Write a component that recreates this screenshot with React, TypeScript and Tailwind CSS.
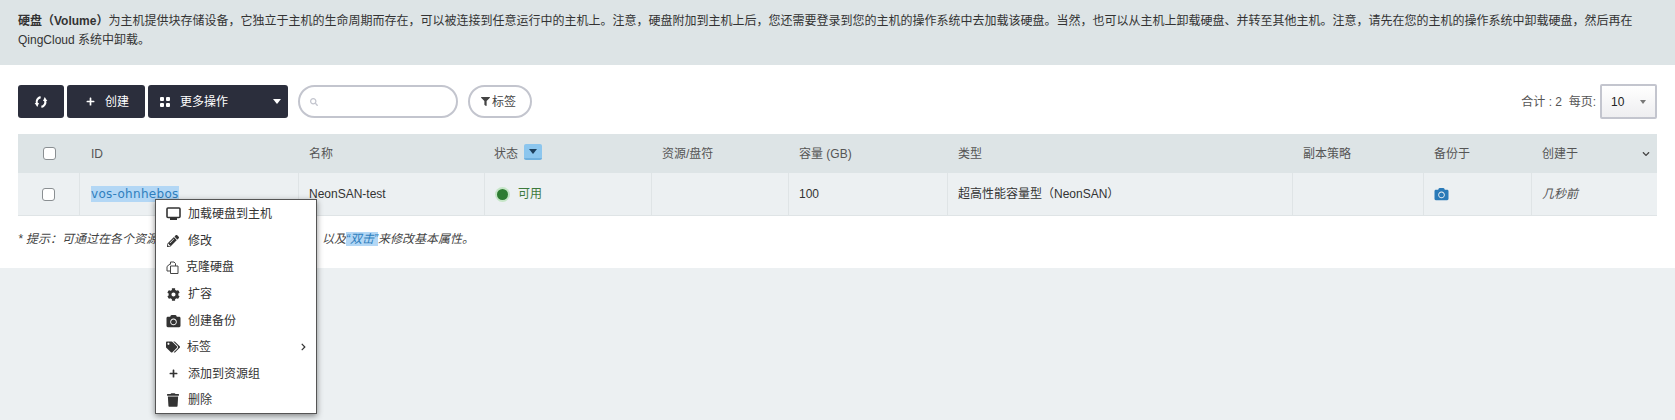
import { FaCamera, FaChevronDown, FaChevronRight, FaCog, FaFilter, FaPencilAlt, FaPlus, FaSearch, FaTags, FaTrash } from 'react-icons/fa';

const sans = { fontFamily: '"Liberation Sans", "Noto Sans CJK SC", sans-serif' };

function Checkbox() {
  return <span className="block w-[13px] h-[13px] rounded-[3px] border border-[#8a8f92] bg-white" />;
}

function DarkButton({ className, children }: { className: string; children: React.ReactNode }) {
  return (
    <button className={`h-[33px] rounded-[3px] bg-[#2b2e3c] text-white text-xs flex items-center ${className}`}>
      {children}
    </button>
  );
}

function MonitorIcon() {
  return (
    <svg width="15" height="14" viewBox="0 0 15 14" fill="none">
      <rect x="1" y="1" width="13" height="9.5" rx="1" stroke="#333" strokeWidth="1.6" />
      <path d="M4 11h7v2H4z" fill="#333" />
    </svg>
  );
}

function CloneIcon() {
  return (
    <svg width="13" height="13" viewBox="0 0 13 13" fill="none" stroke="#444" strokeWidth="1">
      <path d="M4.5 3.5V1h3.5l1.5 1.5v2.5" />
      <path d="M4.5 2.5L1 5.5v4.5h3.5" />
      <path d="M4.5 5h7.5v7.5H4.5z" />
    </svg>
  );
}

const columns = [
  { label: '', width: 'w-[62px]', pad: 'justify-center' },
  { label: 'ID', width: 'w-[219px]', pad: 'pl-[11px]' },
  { label: '名称', width: 'w-[186px]', pad: 'pl-[10px]' },
  { label: '状态', width: 'w-[167px]', pad: 'pl-[9px]' },
  { label: '资源/盘符', width: 'w-[137px]', pad: 'pl-[10px]' },
  { label: '容量 (GB)', width: 'w-[159px]', pad: 'pl-[10px]' },
  { label: '类型', width: 'w-[345px]', pad: 'pl-[10px]' },
  { label: '副本策略', width: 'w-[131px]', pad: 'pl-[10px]' },
  { label: '备份于', width: 'w-[108px]', pad: 'pl-[10px]' },
  { label: '创建于', width: 'flex-1', pad: 'pl-[10px]' },
];

const menuItems = [
  { icon: <MonitorIcon />, label: '加载硬盘到主机', gap: 'gap-[7px]' },
  { icon: <FaPencilAlt className="w-[12px] h-[12px] mx-[1px]" />, label: '修改', gap: 'gap-[8px]' },
  { icon: <CloneIcon />, label: '克隆硬盘', gap: 'gap-[7px]' },
  { icon: <FaCog className="w-[13px] h-[13px] mx-[1px]" />, label: '扩容', gap: 'gap-[7px]' },
  { icon: <FaCamera className="w-[15px] h-[14px]" />, label: '创建备份', gap: 'gap-[7px]' },
  { icon: <FaTags className="w-[14px] h-[14px]" />, label: '标签', gap: 'gap-[7px]', more: true },
  { icon: <FaPlus className="w-[9px] h-[9px] mx-[3px]" />, label: '添加到资源组', gap: 'gap-[7px]' },
  { icon: <FaTrash className="w-[12px] h-[14px] mx-[1px]" />, label: '删除', gap: 'gap-[8px]' },
];

export default function App() {
  return (
    <div className="relative h-[420px] overflow-hidden bg-[#ecf0f2] text-xs text-[#333]" style={sans}>
      <div className="h-[65px] bg-[#dde4e6] px-[18px] pt-[12px] leading-[19px] text-[#333]">
        <b>硬盘（Volume）</b>为主机提供块存储设备，它独立于主机的生命周期而存在，可以被连接到任意运行中的主机上。注意，硬盘附加到主机上后，您还需要登录到您的主机的操作系统中去加载该硬盘。当然，也可以从主机上卸载硬盘、并转至其他主机。注意，请先在您的主机的操作系统中卸载硬盘，然后再在
        <br />
        QingCloud 系统中卸载。
      </div>

      <div className="h-[203px] bg-white px-[18px] pt-[20px]">
        <div className="flex items-center h-[33px]">
          <DarkButton className="w-[46px] justify-center">
            <svg width="14" height="14" viewBox="0 0 14 14" fill="none" stroke="#fff" strokeWidth="2.1">
              <path d="M6.6 2.1A5 5 0 0 0 2.9 8.6" />
              <path d="M7.4 11.9A5 5 0 0 0 11.1 5.4" />
              <path d="M0.7 7.9L5 7.9 3.3 12z" fill="#fff" stroke="none" />
              <path d="M13.3 6.1L9 6.1 10.7 2z" fill="#fff" stroke="none" />
            </svg>
          </DarkButton>
          <DarkButton className="ml-[3px] w-[78px] pl-[19px] gap-[10px]">
            <FaPlus className="w-[9px] h-[9px]" />
            创建
          </DarkButton>
          <DarkButton className="ml-[3px] w-[140px] pl-[12px] pr-[6px]">
            <span className="grid grid-cols-2 gap-[2px] mr-[10px]">
              <span className="w-[4px] h-[4px] rounded-[1px] bg-white" />
              <span className="w-[4px] h-[4px] rounded-[1px] bg-white" />
              <span className="w-[4px] h-[4px] rounded-[1px] bg-white" />
              <span className="w-[4px] h-[4px] rounded-[1px] bg-white" />
            </span>
            更多操作
            <span className="ml-auto mr-[1px] w-0 h-0 border-x-[4px] border-x-transparent border-t-[5px] border-t-white" />
          </DarkButton>
          <div className="ml-[10px] w-[160px] h-[33px] rounded-full border-2 border-[#c3c5ce] bg-white flex items-center pl-[10px]">
            <FaSearch className="w-[8px] h-[8px] text-[#c3c5ce]" />
          </div>
          <div className="ml-[10px] w-[64px] h-[33px] rounded-full border-2 border-[#c3c5ce] bg-white flex items-center pl-[11px] gap-[2px] text-[#444]">
            <FaFilter className="w-[9px] h-[9px]" />
            标签
          </div>
          <span className="ml-auto text-[#555]">合计 : 2&nbsp;&nbsp;每页:</span>
          <div className="ml-[4px] w-[57px] h-[35px] rounded-[2px] border-2 border-[#c3c5ce] bg-gradient-to-b from-white to-[#eeeef0] flex items-center pl-[9px] text-[#222]">
            10
            <span className="ml-[16px] w-0 h-0 border-x-[3.5px] border-x-transparent border-t-[4px] border-t-[#777]" />
          </div>
        </div>

        <div className="mt-[16px]">
          <div className="flex h-[39px] items-center bg-[#dde4e6] text-[#555]">
            {columns.map((col, index) => (
              <div key={index} className={`${col.width} ${col.pad} flex items-center`}>
                {index === 0 && <Checkbox />}
                {col.label}
                {col.label === '状态' && (
                  <span className="ml-[6px] w-[18px] h-[16px] -mt-[3px] rounded-[2px] bg-[#8cc6ee] border-b-2 border-[#6fb0de] flex items-center justify-center">
                    <span className="w-0 h-0 border-x-[4px] border-x-transparent border-t-[5px] border-t-[#1d3f5c]" />
                  </span>
                )}
                {index === 9 && <FaChevronDown className="ml-auto mr-[6px] w-[10px] h-[8px] text-[#444]" />}
              </div>
            ))}
          </div>
          <div className="flex h-[43px] items-center bg-[#ecf0f2] border-b border-[#dfe4e6] text-[#333]">
            <div className="w-[62px] h-full flex items-center justify-center border-r border-[#dfe4e6]"><Checkbox /></div>
            <div className="w-[219px] h-full flex items-center pl-[11px] border-r border-[#dfe4e6]">
              <span className="bg-[#b3d7f5] text-[#2f7fbd] h-[16px] leading-[16px] tracking-[0.3px]" style={{ fontFamily: '"DejaVu Sans", sans-serif' }}>vos-ohnhebos</span>
            </div>
            <div className="w-[186px] h-full flex items-center pl-[10px] border-r border-[#dfe4e6]">NeonSAN-test</div>
            <div className="w-[167px] h-full flex items-center pl-[12px] gap-[10px] border-r border-[#dfe4e6] text-[#3c7a3c]">
              <span className="w-[11px] h-[11px] rounded-full bg-[#2e7d32] shadow-[0_0_0_2px_#c6e6c8]" />
              可用
            </div>
            <div className="w-[137px] h-full border-r border-[#dfe4e6]" />
            <div className="w-[159px] h-full flex items-center pl-[10px] border-r border-[#dfe4e6]">100</div>
            <div className="w-[345px] h-full flex items-center pl-[10px] border-r border-[#dfe4e6]">超高性能容量型（NeonSAN）</div>
            <div className="w-[131px] h-full border-r border-[#dfe4e6]" />
            <div className="w-[108px] h-full flex items-center pl-[10px] border-r border-[#dfe4e6]">
              <FaCamera className="w-[15px] h-[14px] text-[#2a7ab8]" />
            </div>
            <div className="flex-1 h-full flex items-center pl-[10px] italic text-[#555]">几秒前</div>
          </div>
        </div>

        <p className="mt-[15px] italic text-[#444]">
          * 提示：可通过在各个资源上点击“右键”来进行常用操作，以及<span className="bg-[#b3d7f5] text-[#2f7fbd]">“双击”</span>来修改基本属性。
        </p>
      </div>

      <div className="absolute left-[155px] top-[199px] w-[162px] h-[215px] pt-[1px] bg-white border border-[#555] shadow-[0_2px_6px_rgba(0,0,0,0.45)]">
        {menuItems.map((item) => (
          <div key={item.label} className={`h-[26.6px] flex items-center pl-[10px] pr-[9px] text-[#333] ${item.gap}`}>
            {item.icon}
            {item.label}
            {item.more && <FaChevronRight className="ml-auto w-[7px] h-[8px]" />}
          </div>
        ))}
      </div>
    </div>
  );
}
